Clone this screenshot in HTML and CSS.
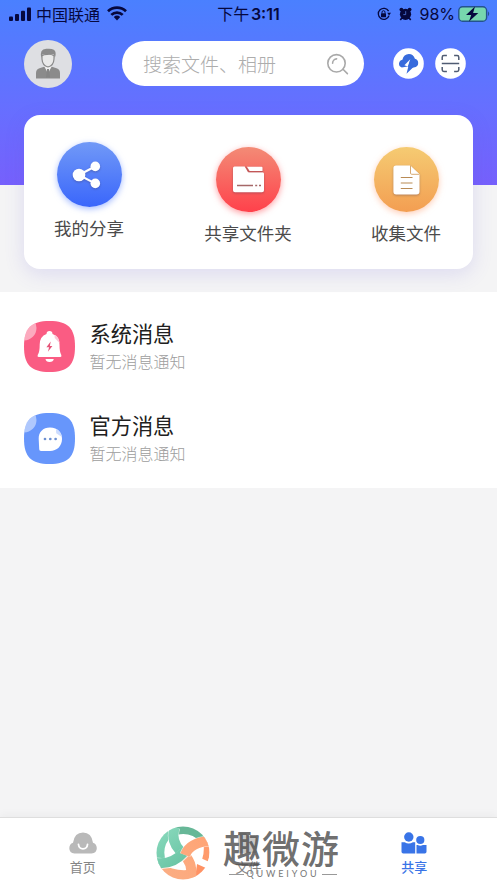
FILE: index.html
```html
<!DOCTYPE html>
<html lang="zh-CN">
<head>
<meta charset="utf-8">
<meta name="viewport" content="width=device-width, initial-scale=1">
<title>共享</title>
<link rel="stylesheet" href="styles.css">
</head>
<body>
<div class="app">
  <header class="header">
    <div class="status">
      <div class="status-left">
        <svg class="signal" width="23" height="14" viewBox="0 0 23 14"><rect x="0" y="9.5" width="4" height="4.5" rx="1"/><rect x="6" y="7" width="4" height="7" rx="1"/><rect x="12" y="3.8" width="4" height="10.2" rx="1"/><rect x="18" y="0.5" width="4" height="13.5" rx="1"/></svg>
        <span class="carrier">中国联通</span>
        <svg class="wifi" width="20" height="15" viewBox="0 0 20 15"><g fill="none" stroke="#06083e" stroke-width="2.7"><path d="M1 5.3a13 13 0 0 1 18 0"/><path d="M4.3 8.9a8.2 8.2 0 0 1 11.4 0"/></g><path d="M6.8 11.1a4.7 4.7 0 0 1 6.4 0L10 14.5z"/></svg>
      </div>
      <div class="clock">下午 <b>3:11</b></div>
      <div class="status-right">
        <svg width="14" height="14" viewBox="0 0 14 14"><path d="M11.6 4.1A5.5 5.5 0 1 0 12 8.7" fill="none" stroke="#06083e" stroke-width="1.3"/><path d="M10.2 5.8h3.8l-1.9 2.7z"/><rect x="4" y="6.3" width="5" height="4" rx=".5"/><path d="M5 6.5V5.2a1.5 1.5 0 0 1 3 0v1.3" fill="none" stroke="#06083e" stroke-width="1"/></svg>
        <svg class="alarm" width="13" height="14" viewBox="0 0 13 14"><circle cx="6.5" cy="7.3" r="5.6"/><circle cx="2.4" cy="2.6" r="1.9"/><circle cx="10.6" cy="2.6" r="1.9"/><path d="M2.8 11l-1.500 2M10.200 11l1.500 2" stroke="#06083e" stroke-width="1.600"/><path d="M6.700 4.200v3.400H4.300" fill="none" stroke="#527ade" stroke-width=".8"/></svg>
        <span class="percent">98%</span>
        <svg class="battery" width="32" height="18" viewBox="0 0 32 18"><rect x=".8" y="1.8" width="27.8" height="14.4" rx="3.8" fill="#77d6ae" stroke="#24538e" stroke-width="1.4"/><path d="M30 6.3q2.4 2.5 0 5z" fill="#24538e"/><path d="M17 1.5L8 10h5.2L11 16.5 20.3 8h-5.2z"/></svg>
      </div>
    </div>
    <div class="toolbar">
      <svg class="avatar" width="48" height="48" viewBox="0 0 48 48"><circle cx="24" cy="24" r="24" fill="#dedfe3"/><path d="M12 38.5V33q0-4.4 5-5.2l3.2-1 3.8 4 3.8-4 3.2 1q5 .8 5 5.2v5.5z" fill="#8b8b8b"/><path d="M20.4 26.2l3.6 7.8 3.6-7.8z" fill="#f0f0f0"/><path d="M23 29h2l1 8.5h-4z" fill="#858585"/><path d="M18 15.8q-.6 7.3 3.2 10 2.8 2 5.6 0 3.800-2.700 3.200-10-3-1.800-6-1.500-4-.2-6 1.500z" fill="#e9e9e9" stroke="#8b8b8b" stroke-width="1.200"/><path d="M17.200 18q-2-8.700 5-9.200 9-1 9.400 4 .4 2.700-.8 5.200l-.9-3.500q-6-.8-11.500 0z" fill="#8b8b8b"/></svg>
      <div class="search">
        <span>搜索文件、相册</span>
        <svg width="23" height="22" viewBox="0 0 23 22" fill="none" stroke="#a9a9a9" stroke-width="1.6" stroke-linecap="round"><circle cx="10.500" cy="10.300" r="8.700"/><path d="M17 16.300l4.400 4.300M6.600 10.200a4.200 4.200 0 0 1 4-4.300"/></svg>
      </div>
      <svg class="round-button" width="31" height="31" viewBox="0 0 31 31"><circle cx="15.5" cy="15.5" r="15.300" fill="#fff"/><path d="M8.800 19.500Q5.800 18.700 6 15.600q.3-3.100 3.400-3.800 1.300-5.600 6.500-5.700 4.600.1 6 4.600 3.200.7 3.300 4.200.1 3.900-4.500 4.600l-3 .2-3.200-1.200z" fill="#376bdc"/><path d="M17.300 11.200l-5.900 6 3.400 1.200z" fill="#fff"/><path d="M17.500 11l-.8 5.900 4.300 1.500-7.500 7.400 1.800-7z" fill="#376bdc"/></svg>
      <svg class="round-button" width="31" height="31" viewBox="0 0 31 31"><circle cx="15.5" cy="15.5" r="15.3" fill="#fff"/><path d="M7.2 12V9.2q0-1.7 1.7-1.7h3M19.1 7.5h3q1.7 0 1.7 1.7V12M7.2 19v2.8q0 1.7 1.7 1.7h3M19.1 23.5h3q1.7 0 1.7-1.7V19M6.8 15.4h17.4" fill="none" stroke="#505c73" stroke-width="1.5"/></svg>
    </div>
  </header>

  <section class="card">
    <a class="action action-share">
      <span class="disc blue"><svg width="29" height="28" viewBox="0 0 29 28"><path d="M7 14L23 5.5M7 14l16 8.3" stroke="#fff" stroke-width="2"/><circle cx="7" cy="14" r="6.3" fill="#fff"/><circle cx="23.3" cy="5.4" r="4.8" fill="#fff"/><circle cx="23.3" cy="22.4" r="4.8" fill="#fff"/></svg></span>
      <span>我的分享</span>
    </a>
    <a class="action action-folder">
      <span class="disc red"><svg width="31" height="27" viewBox="0 0 31 27"><path d="M0 2Q0 .5 1.5.5h10.2l3.300 5.800h14.500q1.500 0 1.500 1.500v16.500q0 2-2 2H2q-2 0-2-2z" fill="#fff"/><path d="M14 .8h14.500q1 0 1 1V5H16.600z" fill="#fff"/><path d="M12.800.8l3.100 4.900h13.800" fill="none" stroke="#c55757" stroke-width="1"/><path d="M4 19.500h16M22.200 19.500h2M26 19.500h2" stroke="#a66868" stroke-width="1.300"/></svg></span>
      <span>共享文件夹</span>
    </a>
    <a class="action action-file">
      <span class="disc orange"><svg width="27" height="30" viewBox="0 0 27 30"><path d="M3 .5h14l9.5 8.8v17.2q0 3-3 3H3.200q-2.800 0-2.800-3V3.300Q.4.5 3 .5z" fill="#fff"/><path d="M17.500.7v7.400q0 1.200 1.200 1.200h7.600" fill="#fff" stroke="#d1a064" stroke-width=".9"/><path d="M7.800 12.500h11.700M7.800 18h11.700M7.800 23.500h11.700" stroke="#b98b55" stroke-width="1.200"/></svg></span>
      <span>收集文件</span>
    </a>
  </section>

  <main class="messages">
    <article class="message">
      <svg class="message-icon" width="51" height="51" viewBox="0 0 51 51"><defs><clipPath id="tile"><path d="M25.500 0C44 0 51 7 51 25.500S44 51 25.500 51 0 44 0 25.500 7 0 25.500 0z"/></clipPath></defs><g clip-path="url(#tile)"><rect width="51" height="51" fill="#fa5c83"/><circle cx="0" cy="7" r="12.500" fill="#fff" opacity=".48"/></g><path d="M22.500 13q0-3 3-3t3 3q7 2.500 7 10.500 0 7.500 1.800 10.500.7 2-1 2H14.700q-1.700 0-1-2 2-2.500 2-10.500t6.800-10.500zM21.500 38h8.300q-.5 3-4.200 3t-4.100-3z" fill="#fff"/><path d="M30.500 14q4.500 1.500 5 8l-4.800-5z" fill="#fcc8d8"/><path d="M26.700 20.500l-4.300 5.700h2.700l-1.200 4.500 4.500-5.800h-2.500z" fill="#e55479"/></svg>
      <div class="message-text"><h2>系统消息</h2><p>暂无消息通知</p></div>
    </article>
    <article class="message">
      <svg class="message-icon" width="51" height="51" viewBox="0 0 51 51"><g clip-path="url(#tile)"><rect width="51" height="51" fill="#6796fb"/><circle cx="0" cy="7" r="12.500" fill="#fff" opacity=".48"/></g><path d="M26 14.500C34 14.500 38 20 38 26c0 7-5 12-12 12H17q-1.800 0-1.800-1.800l-.5-10.200C14.500 19 19 14.500 26 14.500z" fill="#fff"/><path d="M32 16q5.300 2.500 6 8l-5.800-3.800z" fill="#ccdcff"/><g fill="#6d8fd0"><circle cx="21" cy="26" r="1.350"/><circle cx="26.300" cy="26" r="1.350"/><circle cx="31.600" cy="26" r="1.350"/></g></svg>
      <div class="message-text"><h2>官方消息</h2><p>暂无消息通知</p></div>
    </article>
  </main>

  <nav class="tabs">
    <a class="tab">
      <svg width="28" height="22" viewBox="0 0 28 22"><path d="M5.500 21.500Q.3 21 .3 16.300q0-4.300 3.700-5.600Q5.500.5 14 .5t10 10.200q3.800 1.300 3.800 5.600 0 4.700-5.300 5.200z" fill="#b9b9b9"/><path d="M9.500 12.500q.5 4.300 4.500 4.300t4.500-4.300" fill="none" stroke="#fff" stroke-width="1.800" stroke-linecap="round"/></svg>
      <span>首页</span>
    </a>
    <a class="tab">
      <svg width="22" height="22" viewBox="0 0 24 22"><path d="M3 0h7l2 3h8q2 0 2 2v15q0 2-2 2H3q-2 0-2-2V2q0-2 2-2z" fill="#c6c6c6"/></svg>
      <span>文件</span>
    </a>
    <a class="tab active">
      <svg width="26" height="22" viewBox="0 0 26 22" fill="#3974e7"><circle cx="7.800" cy="5" r="4.700"/><circle cx="19.300" cy="8" r="4.100"/><path d="M.5 10.200h3.200q4 2.500 8.200 0h2.300v11.300H2.300Q.5 21.500.5 19.700zM15.500 13h1.200q2.600 1.500 5.200 0h3.600v6.700q0 1.800-1.800 1.800h-8.200z"/></svg>
      <span>共享</span>
    </a>
    <div class="watermark">
      <svg width="54" height="54" viewBox="0 0 54 54"><defs><clipPath id="disc"><circle cx="27" cy="27" r="26.500"/></clipPath><linearGradient id="mint" gradientUnits="userSpaceOnUse" x1="5" y1="5" x2="30" y2="38"><stop stop-color="#87d8bb"/><stop offset="1" stop-color="#69c3a3"/></linearGradient><linearGradient id="peach" gradientUnits="userSpaceOnUse" x1="10" y1="48" x2="50" y2="12"><stop stop-color="#fbad83"/><stop offset="1" stop-color="#ffa475"/></linearGradient></defs>
        <g clip-path="url(#disc)" fill="none">
          <path d="M20 4Q36 0 49 13" stroke="#67b797" stroke-width="10"/>
          <path d="M12 5Q-3 20 5 39" stroke="url(#mint)" stroke-width="12"/>
          <path d="M50 12Q52 27 49 34" stroke="#ff9b6c" stroke-width="6"/>
          <path d="M41 38l9 4-5 12-6-1z" fill="#ff9264"/>
          <path d="M3 43Q18 53 40 49" stroke="url(#peach)" stroke-width="12"/>
          <path d="M27 28Q37 36 35 51" stroke="url(#peach)" stroke-width="10"/>
          <path d="M19 1Q13 17 29 29" stroke="#fff" stroke-opacity=".7" stroke-width="11"/>
          <path d="M19 1Q13 17 29 29" stroke="url(#mint)" stroke-width="10"/>
          <path d="M0 37Q17 40 28 27" stroke="#fff" stroke-opacity=".7" stroke-width="11"/>
          <path d="M0 37Q17 39 28 26" stroke="url(#mint)" stroke-width="10"/>
          <path d="M29 29Q34 16 54 15" stroke="#fff" stroke-opacity=".7" stroke-width="11"/>
          <path d="M29 29Q34 16 54 15" stroke="url(#peach)" stroke-width="10"/>
        </g></svg>
      <div class="brand"><strong>趣微游</strong><span class="brand-latin">QUWEIYOU</span></div>
    </div>
  </nav>
</div>
</body>
</html>
```
FILE: styles.css
```css
* { box-sizing: border-box; }
body {
  margin: 0;
  font-family: "Noto Sans CJK SC", "Noto Sans", sans-serif;
  background: #f4f4f5;
}
svg { display: block; flex: none; }
.app {
  display: flex;
  flex-direction: column;
  height: 883px;
  width: 497px;
  overflow: hidden;
}
.header {
  flex: none;
  height: 185px;
  background: linear-gradient(#4a80ff, #666fff 58%, #7660fc);
}
.status {
  display: grid;
  grid-template-columns: 1fr auto 1fr;
  align-items: center;
  height: 27px;
  padding: 0 9px;
  color: #06083e;
  fill: #06083e;
  font-size: 16px;
  line-height: 24px;
}
.status-left, .status-right { display: flex; align-items: center; }
.status-right { justify-content: flex-end; font-family: Inter, sans-serif; }
.signal { margin-right: 4px; }
.wifi { margin-left: 7px; }
.clock b { font-family: Inter, sans-serif; font-weight: 600; margin-left: -2px; }
.alarm { margin-left: 8px; }
.percent { margin-left: 7px; }
.battery { margin-left: 3px; margin-right: -2px; }
.toolbar { display: flex; align-items: center; height: 73px; padding-left: 24px; }
.search {
  display: flex;
  align-items: center;
  justify-content: space-between;
  width: 242px;
  height: 45px;
  margin: 0 29px 0 50px;
  padding: 0 15px 0 21px;
  border-radius: 23px;
  background: #fff;
  color: #adadad;
  font-size: 19px;
  font-weight: 300;
}
.round-button + .round-button { margin-left: 11px; }
.card {
  flex: none;
  position: relative;
  display: flex;
  align-items: flex-start;
  height: 154px;
  margin: -70px 24px 23px;
  padding: 27px 0 0 20px;
  border-radius: 16px;
  background: #fff;
  box-shadow: 0 5px 20px rgba(100, 90, 220, .16);
}
.action {
  display: flex;
  flex-direction: column;
  align-items: center;
  width: 90px;
  color: #4b4b4b;
  font-size: 17.500px;
  line-height: 26px;
  white-space: nowrap;
  gap: 8px;
}
.action-folder { margin: 5px 0 0 69px; }
.action-file { margin: 5px 0 0 68px; }
.disc {
  display: flex;
  align-items: center;
  justify-content: center;
  width: 65px;
  height: 65px;
  border-radius: 50%;
}
.disc svg { filter: drop-shadow(0 1px 1px rgba(60, 50, 80, .35)); }
.blue { background: linear-gradient(#7199f7, #3a66fb); box-shadow: 0 2px 6px #6a91ff99; }
.blue svg { margin-right: 5px; }
.red { background: linear-gradient(#f38b76, #ff414b); box-shadow: 0 2px 6px #ff626999; }
.orange { background: linear-gradient(#f5cb72, #f39e52); box-shadow: 0 2px 6px #ffae8799; }
.messages { flex: none; height: 196px; padding: 29px 24px 0; background: #fff; }
.message { display: flex; height: 51px; margin-bottom: 40.500px; }
.message-text { margin-left: 14.500px; }
.message h2 {
  margin: -4px 0 0;
  color: #202020;
  font-size: 21.200px;
  line-height: 31px;
  font-weight: 400;
}
.message p { margin: 1px 0 0; color: #9d9d9d; font-size: 16px; line-height: 24px; font-weight: 300; }
.tabs {
  position: relative;
  display: grid;
  grid-template-columns: repeat(3, 1fr);
  flex: none;
  height: 66px;
  margin-top: auto;
  padding-top: 14px;
  border-top: 1px solid #dedede;
  background: #fff;
  box-shadow: 0 -3px 8px rgba(0, 0, 0, .035);
}
.tab {
  display: flex;
  flex-direction: column;
  align-items: center;
  gap: 3px;
  color: #858585;
  font-size: 13px;
  line-height: 19px;
}
.active { color: #3974e7; font-weight: 500; }
.watermark { position: absolute; top: 8px; left: 156px; display: flex; }
.brand { display: flex; flex-direction: column; width: 118px; margin-left: 13px; }
.brand strong {
  color: rgba(80, 80, 80, .83);
  font-size: 38px;
  line-height: 42px;
  font-weight: 500;
  letter-spacing: 1px;
  white-space: nowrap;
}
.brand-latin {
  display: flex;
  align-items: center;
  gap: 2px;
  padding: 0 4px 0 6px;
  color: #777;
  font-family: Lato, sans-serif;
  font-size: 9px;
  line-height: 10px;
  margin-top: 1px;
  letter-spacing: 2.900px;
}
.brand-latin::before, .brand-latin::after { content: ""; flex: 1; height: 1px; background: #999; }
```
